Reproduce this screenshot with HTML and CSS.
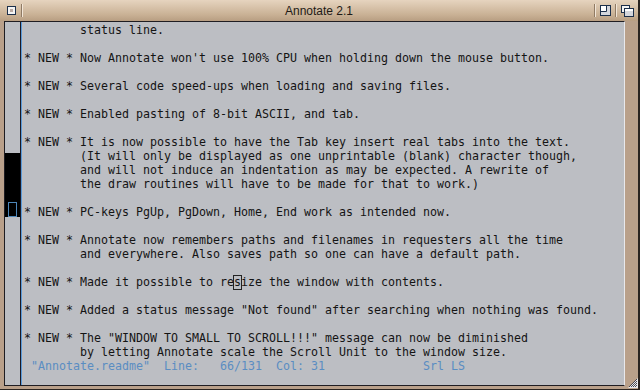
FILE: index.html
```html
<!DOCTYPE html>
<html lang="en">
<head>
  <meta charset="UTF-8" />
  <title>Annotate 2.1</title>
  <link rel="stylesheet" href="styles.css">
</head>
<body>
  <div class="window">
    <div class="titlebar">
      <div class="tb-left">
        <svg class="gadget close" width="9" height="9" viewBox="0 0 9 9">
          <rect x="0.5" y="0.5" width="8" height="8" fill="#f4f4f4" stroke="#1c2f4a"/>
          <rect x="3" y="3" width="3" height="3" fill="#b9a9a2"/>
        </svg>
        <span class="sep"></span>
      </div>
      <div class="title">Annotate 2.1</div>
      <div class="tb-right">
        <span class="sep"></span>
        <svg class="gadget zoom" width="11" height="11" viewBox="0 0 11 11">
          <rect x="0.5" y="0.5" width="10" height="10" fill="#d4d6dc" stroke="#1c2f4a"/>
          <rect x="1" y="1" width="5" height="5" fill="#ffffff"/>
          <path d="M6.5 1 V6.5 H1" fill="none" stroke="#1c2f4a"/>
        </svg>
        <span class="sep"></span>
        <svg class="gadget depth" width="13" height="12" viewBox="0 0 13 12">
          <rect x="0.5" y="0.5" width="8" height="7" fill="#f4f4f4" stroke="#1c2f4a"/>
          <rect x="3.5" y="3.5" width="9" height="8" fill="#d4d6dc" stroke="#1c2f4a"/>
          <rect x="4" y="4" width="8" height="2" fill="#ffffff"/>
        </svg>
      </div>
    </div>

    <div class="frame">
      <div class="panel">
        <div class="gutter">
          <div class="view">
            <div class="line-mark"></div>
          </div>
        </div>
        <div class="editor">
<pre class="text">        status line.

* NEW * Now Annotate won't use 100% CPU when holding down the mouse button.

* NEW * Several code speed-ups when loading and saving files.

* NEW * Enabled pasting of 8-bit ASCII, and tab.

* NEW * It is now possible to have the Tab key insert real tabs into the text.
        (It will only be displayed as one unprintable (blank) character though,
        and will not induce an indentation as may be expected. A rewrite of
        the draw routines will have to be made for that to work.)

* NEW * PC-keys PgUp, PgDown, Home, End work as intended now.

* NEW * Annotate now remembers paths and filenames in requesters all the time
        and everywhere. Also saves path so one can have a default path.

* NEW * Made it possible to re<span class="caret"></span>size the window with contents.

* NEW * Added a status message "Not found" after searching when nothing was found.

* NEW * The "WINDOW TO SMALL TO SCROLL!!!" message can now be diminished
        by letting Annotate scale the Scroll Unit to the window size.</pre>
<pre class="status">"Annotate.readme"  Line:   66/131  Col: 31              Srl LS</pre>
        </div>
      </div>
      <div class="scroller"></div>
    </div>

    <svg class="sizer" width="10" height="10" viewBox="0 0 10 10">
      <polygon points="10,0 10,10 0,10" fill="#e8e8ec"/>
      <path d="M9 3 L3 9 M9 5 L5 9 M9 7 L7 9 M9 1 L1 9" stroke="#3a3a44" stroke-width="0.9"/>
    </svg>
  </div>
</body>
</html>
```

FILE: styles.css
```css
body {
  margin: 0;
  background-color: #b9a08a;
}
.window {
  position: relative;
  width: 640px;
  height: 390px;
  background-color: #b9a08a;
  border-right: 2px solid #2a2420;
  border-bottom: 1px solid #2a2420;
  box-sizing: border-box;
  overflow: hidden;
}
.titlebar {
  height: 21px;
  display: grid;
  grid-template-columns: 1fr auto 1fr;
  align-items: center;
  background: linear-gradient(#e6d4bf, #c9b195 70%, #b89e82);
}
.tb-left, .tb-right {
  display: flex;
  align-items: center;
}
.tb-left {
  padding-left: 7px;
}
.tb-right {
  justify-content: flex-end;
  padding-right: 4px;
}
.gadget {
  display: block;
}
.close {
  margin-right: 5px;
}
.sep {
  width: 1px;
  height: 13px;
  background-color: #8f7a64;
  border-right: 1px solid #f2e6d8;
}
.zoom {
  margin: 0 4px;
}
.depth {
  margin-left: 4px;
}
.title {
  font-family: "Liberation Sans", Arial, sans-serif;
  font-size: 12px;
  color: #1e1a16;
  padding-top: 1px;
}
.frame {
  display: flex;
  height: 365px;
  padding-left: 4px;
}
.panel {
  flex: 1;
  display: flex;
  border: 1px solid #1f1d22;
  border-right-color: #e8e8ec;
  background-color: #bcbec3;
}
.gutter {
  width: 15px;
  border-right: 1px solid #1a1a26;
}
.view {
  margin-top: 131px;
  height: 64px;
  background-color: #000;
  display: flex;
  flex-direction: column;
  justify-content: flex-end;
}
.line-mark {
  width: 7px;
  height: 13px;
  margin-left: 3px;
  border: 1px solid #4d86b8;
}
.editor {
  flex: 1;
  border-left: 1px solid #5a9ad8;
  padding: 1px 0 0 2px;
}
.text, .status {
  margin: 0;
  font-family: "DejaVu Sans Mono", monospace;
  font-size: 11.63px;
  line-height: 14px;
  color: #141414;
}
.status {
  color: #5a8dc2;
  padding-left: 7px;
}
/* text cursor box drawn over the character after it */
.caret {
  position: relative;
}
.caret::before {
  content: "";
  position: absolute;
  left: -1px;
  top: 0;
  width: 7px;
  height: 13px;
  border: 1px solid #222;
}
.scroller {
  width: 13px;
}
.sizer {
  position: absolute;
  right: 0;
  bottom: 1px;
}
```
